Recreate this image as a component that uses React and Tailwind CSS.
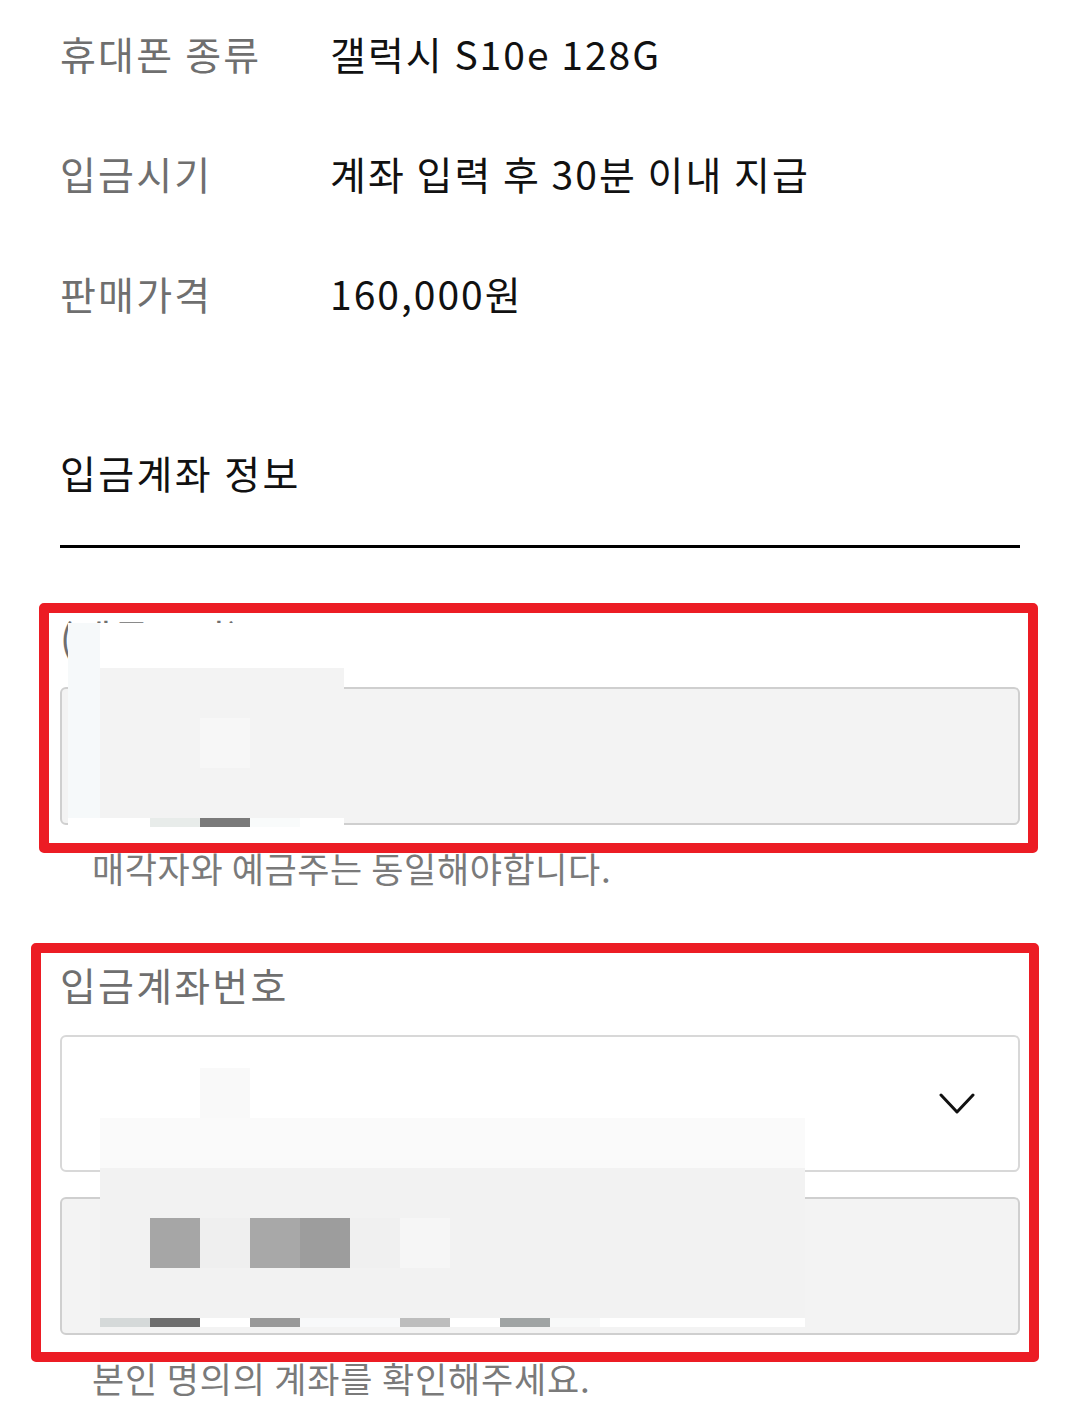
const font = { fontFamily: '"Noto Sans CJK KR", "Noto Sans", sans-serif' }

function InfoRow({ label, value }) {
  return (
    <div className="flex items-center h-[60px]">
      <div className="w-[270px] text-[39px] tracking-[2.2px] text-[#6f6f6f]">{label}</div>
      <div className="text-[39px] tracking-[2px] text-[#111]">{value}</div>
    </div>
  )
}

// pixelated blur blocks from the screenshot
function Block({ c }) {
  return <div className={c} />
}

export default function App() {
  return (
    <div className="w-[1080px] h-[1418px] bg-white overflow-hidden relative" style={font}>
      <div className="px-[60px] pt-[23px] flex flex-col">
        <div className="flex flex-col gap-[60px]">
          <InfoRow label="휴대폰 종류" value="갤럭시 S10e 128G" />
          <InfoRow label="입금시기" value="계좌 입력 후 30분 이내 지급" />
          <InfoRow label="판매가격" value="160,000원" />
        </div>

        <div className="mt-[119px] h-[60px] flex items-center text-[39px] tracking-[2.4px] text-[#111]">입금계좌 정보</div>
        <div className="mt-[43px] h-[3px] bg-black" />

        {/* 예금주명 */}
        <div className="mt-[58px] h-[60px] flex items-center text-[39px] tracking-[2.2px] text-[#6f6f6f]">(예금주명)</div>
        <div className="mt-[21px] h-[138px] rounded-[6px] border-2 border-[#cfcfcf] bg-[#f3f3f3]" />
        <div className="mt-[13px] h-[60px] flex items-center pl-[32px] text-[35px] tracking-[0.6px] text-[#7a7a7a]">매각자와 예금주는 동일해야합니다.</div>

        {/* 입금계좌번호 */}
        <div className="mt-[56px] h-[60px] flex items-center text-[39px] tracking-[2.2px] text-[#6f6f6f]">입금계좌번호</div>
        <div className="mt-[21px] h-[137px] rounded-[6px] border-2 border-[#d8d8d8] bg-white flex items-center justify-end pr-[43px]">
          <svg width="36" height="22" viewBox="0 0 36 22" fill="none">
            <polyline points="2,2 18,19 34,2" stroke="#111" strokeWidth="3" strokeLinecap="round" strokeLinejoin="round" />
          </svg>
        </div>
        <div className="mt-[25px] h-[138px] rounded-[6px] border-2 border-[#cfcfcf] bg-[#f3f3f3]" />
        <div className="mt-[13px] h-[60px] flex items-center pl-[32px] text-[35px] tracking-[0.8px] text-[#7a7a7a]">본인 명의의 계좌를 확인해주세요.</div>
      </div>

      {/* mosaic over 예금주명 */}
      <div className="absolute left-[68px] top-[623px] w-[276px] h-[204px] flex flex-col">
        <div className="flex h-[195px]">
          <div className="w-[32px] bg-[#f6f9fa]" />
          <div className="flex-1 flex flex-col">
            <div className="h-[45px] bg-white" />
            <div className="flex-1 bg-[#f3f3f3] relative">
              <div className="absolute left-[100px] top-[50px] w-[50px] h-[50px] bg-[#f7f7f7]" />
            </div>
          </div>
        </div>
        <div className="flex h-[9px]">
          <Block c="w-[82px] bg-white" />
          <Block c="w-[50px] bg-[#e8ecea]" />
          <Block c="w-[50px] bg-[#7a7a7a]" />
          <Block c="w-[50px] bg-[#f9fbfb]" />
          <Block c="flex-1 bg-white" />
        </div>
      </div>

      {/* mosaic over 입금계좌번호 */}
      <div className="absolute left-[200px] top-[1068px] w-[50px] h-[50px] bg-[#f9f9f9]" />
      <div className="absolute left-[100px] top-[1118px] w-[705px] h-[209px] flex flex-col">
        <div className="h-[50px] bg-[#fafafa]" />
        <div className="h-[150px] bg-[#f2f2f2] flex flex-col justify-center">
          <div className="flex h-[50px] pl-[50px]">
            <Block c="w-[50px] bg-[#a6a6a6]" />
            <Block c="w-[50px] bg-[#efefef]" />
            <Block c="w-[50px] bg-[#a8a8a8]" />
            <Block c="w-[50px] bg-[#9d9d9d]" />
            <Block c="w-[50px] bg-[#f0f0f0]" />
            <Block c="w-[50px] bg-[#f6f6f6]" />
          </div>
        </div>
        <div className="flex h-[9px]">
          <Block c="w-[50px] bg-[#d5d9d9]" />
          <Block c="w-[50px] bg-[#6e6e6e]" />
          <Block c="w-[50px] bg-white" />
          <Block c="w-[50px] bg-[#999999]" />
          <Block c="w-[100px] bg-[#f8f9fa]" />
          <Block c="w-[50px] bg-[#bdbdbd]" />
          <Block c="w-[50px] bg-white" />
          <Block c="w-[50px] bg-[#a0a4a4]" />
          <Block c="w-[50px] bg-[#f8f9f9]" />
          <Block c="flex-1 bg-white" />
        </div>
      </div>

      {/* red highlight boxes */}
      <div className="absolute left-[39px] top-[603px] w-[999px] h-[250px] border-[10px] border-[#ec1c24] rounded-[5px] pointer-events-none" />
      <div className="absolute left-[31px] top-[943px] w-[1008px] h-[419px] border-[10px] border-[#ec1c24] rounded-[5px] pointer-events-none" />
    </div>
  )
}
